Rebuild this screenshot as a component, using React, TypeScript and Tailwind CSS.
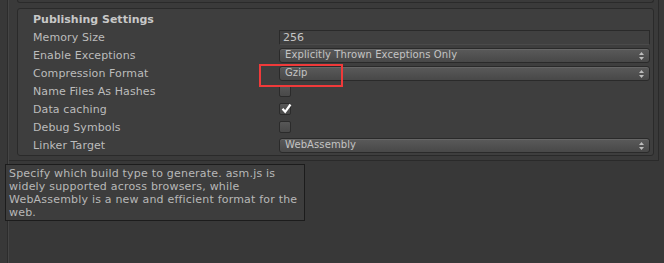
import React from "react";

const Dropdown = ({ label }: { label: string }) => (
  <div className="relative h-[15px] w-full rounded-[3px] border border-[#2a2a2a] bg-gradient-to-b from-[#5a5a5a] to-[#484848] shadow-[inset_0_1px_0_#666] flex items-center pl-[5px] text-[#c4c4c4] text-[10px] tracking-[0.1px] leading-none">
    <span>{label}</span>
    <svg className="absolute right-[5px] top-[3px]" width="5" height="8" viewBox="0 0 5 8">
      <polygon points="2.5,0 5,3 0,3" fill="#bdbdbd" />
      <polygon points="0,5 5,5 2.5,8" fill="#bdbdbd" />
    </svg>
  </div>
);

const Checkbox = ({ checked }: { checked?: boolean }) => (
  <div className="relative h-[12px] w-[12px] rounded-[2px] border border-[#2b2b2b] bg-gradient-to-b from-[#575757] to-[#494949]">
    {checked && (
      <svg className="absolute left-[1px] top-[-1px]" width="11" height="11" viewBox="0 0 11 11">
        <path d="M1.5 5.8 L4.2 8.8 L9.5 1.5" stroke="#ffffff" strokeWidth="2.2" fill="none" strokeLinejoin="miter" />
      </svg>
    )}
  </div>
);

const Row = ({ label, children }: { label: string; children: React.ReactNode }) => (
  <div className="flex h-[18px] items-center">
    <div className="w-[246px] shrink-0 text-[#bcbcbc] text-[11px] tracking-[0.1px] leading-none pt-[1px]">{label}</div>
    <div className="flex-1 flex items-center">{children}</div>
  </div>
);

export default function App() {
  return (
    <div
      className="relative w-[664px] h-[263px] bg-[#383838] overflow-hidden flex"
      style={{ fontFamily: '"DejaVu Sans", Verdana, sans-serif' }}
    >
      <div className="w-[7px] shrink-0" />
      <div className="w-[2px] shrink-0 bg-[#2c2c2c] border-r border-[#454545]" />
      <div className="flex flex-col w-[650px]">
        <div className="bg-[#3a3a3a] border-r border-b border-[#2a2a2a] pl-[8px] pr-[4px] pb-[4px]">
          <div className="h-[3px] border-x border-b border-[#2a2a2a] rounded-b-[3px]" />
          <div className="mt-[5px] rounded-[3px] border border-[#2a2a2a] bg-[#3e3e3e] pl-[15px] pr-[3px] pt-[1px] pb-[1px]">
            <div className="h-[18px] flex items-center text-[#c8c8c8] text-[11px] font-bold leading-none">
              Publishing Settings
            </div>
            <Row label="Memory Size">
              <div className="h-[15px] w-full border border-[#2a2a2a] border-b-[#4a4a4a] bg-[#404040] flex items-center pl-[3px] text-[#c4c4c4] text-[11px] leading-none">
                256
              </div>
            </Row>
            <Row label="Enable Exceptions">
              <Dropdown label="Explicitly Thrown Exceptions Only" />
            </Row>
            <Row label="Compression Format">
              <Dropdown label="Gzip" />
            </Row>
            <Row label="Name Files As Hashes">
              <Checkbox />
            </Row>
            <Row label="Data caching">
              <Checkbox checked />
            </Row>
            <Row label="Debug Symbols">
              <Checkbox />
            </Row>
            <Row label="Linker Target">
              <Dropdown label="WebAssembly" />
            </Row>
          </div>
        </div>
      </div>

      <div className="absolute left-[259px] top-[64px] w-[84px] h-[23px] border-2 border-[#f03a3a]" />

      <div className="absolute left-[5px] top-[164px] w-[300px] h-[57px] bg-[#3d3d3d] border border-[#1c1c1c] pl-[3px] pt-[2px] text-[#b8b8b8] text-[11px] tracking-[0.2px] leading-[13px]">
        Specify which build type to generate. asm.js is widely supported across browsers, while WebAssembly is a new and efficient format for the web.
      </div>
    </div>
  );
}
